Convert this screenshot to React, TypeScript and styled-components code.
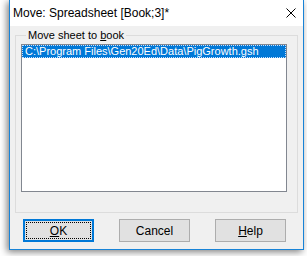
import React from 'react';
import styled, { createGlobalStyle } from 'styled-components';

const GlobalStyle = createGlobalStyle`
  html, body { margin: 0; padding: 0; background: #ffffff; }
  body { width: 307px; height: 256px; overflow: hidden; }
`;

const Screen = styled.div`
  width: 307px;
  height: 256px;
  padding: 0 3px 0 9px;
  box-sizing: border-box;
`;

const Window = styled.div`
  width: 295px;
  height: 250px;
  box-sizing: border-box;
  border: 1px solid #1883d7;
  border-top: none;
  background: #f0f0f0;
  display: flex;
  flex-direction: column;
  box-shadow: -2px 2px 7px rgba(0, 0, 0, 0.5);
  font-family: "Liberation Sans", Arial, sans-serif;
  font-size: 11px;
  color: #000000;
`;

const TitleBar = styled.div`
  height: 26px;
  flex: none;
  background: #ffffff;
  display: flex;
  align-items: center;
  padding: 0 6px 0 3px;
  font-size: 12px;
`;

const Title = styled.span`
  flex: 1;
  padding-bottom: 1px;
`;

const Close = styled.svg`
  width: 10px;
  height: 10px;
  margin-right: 1px;
`;

const Body = styled.div`
  flex: 1;
  display: flex;
  flex-direction: column;
  padding: 3px 5px 0 5px;
`;

const GroupBox = styled.fieldset`
  margin: 0;
  padding: 2px 0 0 5px;
  height: 184px;
  box-sizing: border-box;
  border: 1px solid #dcdcdc;
`;

const Legend = styled.legend`
  padding: 0 2px;
  margin-left: 5px;
  line-height: 13px;
`;

const ListBox = styled.div`
  width: 266px;
  height: 148px;
  box-sizing: border-box;
  border: 1px solid #828790;
  background: #ffffff;
  padding: 0;
`;

const Item = styled.div<{ selected?: boolean }>`
  height: 13px;
  line-height: 13px;
  padding-left: 3px;
  background: ${p => (p.selected ? '#0078d7' : 'transparent')};
  color: ${p => (p.selected ? '#ffffff' : '#000000')};
  outline: ${p => (p.selected ? '1px dotted #c8e0ff' : 'none')};
  outline-offset: -1px;
  white-space: nowrap;
`;

const ButtonRow = styled.div`
  display: flex;
  gap: 25px;
  padding: 6px 0 0 8px;
`;

const Button = styled.div<{ isDefault?: boolean }>`
  width: 71px;
  height: 23px;
  box-sizing: border-box;
  background: #e1e1e1;
  border: ${p => (p.isDefault ? '2px solid #0078d7' : '1px solid #adadad')};
  display: flex;
  align-items: center;
  justify-content: center;
  position: relative;
  font-size: 12px;
  &::after {
    content: '';
    display: ${p => (p.isDefault ? 'block' : 'none')};
    position: absolute;
    inset: 1px;
    border: 1px dotted #000000;
  }
`;

const Key = styled.span`
  text-decoration: underline;
`;

export default function App() {
  return (
    <Screen>
      <GlobalStyle />
      <Window>
        <TitleBar>
          <Title>Move: Spreadsheet [Book;3]*</Title>
          <Close viewBox="0 0 10 10">
            <path d="M0.5 0.5 L9.5 9.5 M9.5 0.5 L0.5 9.5" stroke="#000" strokeWidth="1" fill="none" />
          </Close>
        </TitleBar>
        <Body>
          <GroupBox>
            <Legend>
              Move sheet to <Key>b</Key>ook
            </Legend>
            <ListBox>
              <Item selected>C:\Program Files\Gen20Ed\Data\PigGrowth.gsh</Item>
            </ListBox>
          </GroupBox>
          <ButtonRow>
            <Button isDefault>
              <span>
                <Key>O</Key>K
              </span>
            </Button>
            <Button>Cancel</Button>
            <Button>
              <span>
                <Key>H</Key>elp
              </span>
            </Button>
          </ButtonRow>
        </Body>
      </Window>
    </Screen>
  );
}
